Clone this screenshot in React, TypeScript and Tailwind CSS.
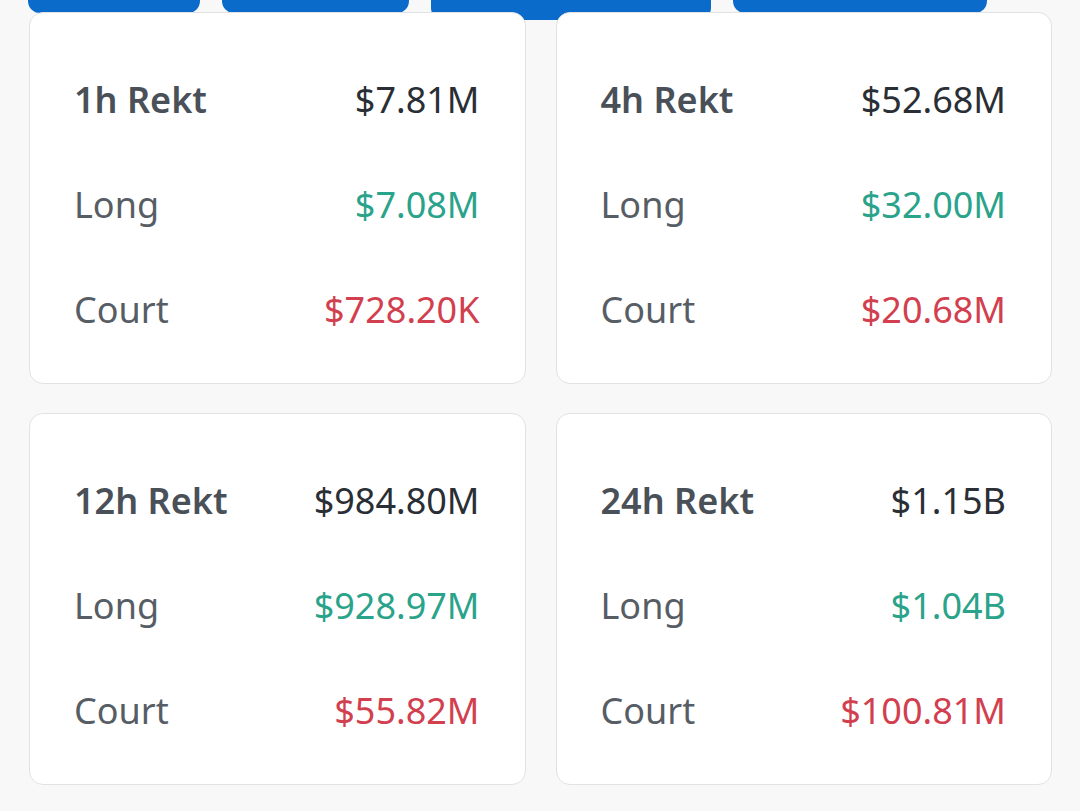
import React from 'react';

interface RektCard {
    title: string;
    total: string;
    long: string;
    short: string;
}

const cards: RektCard[] = [
    { title: '1h Rekt', total: '$7.81M', long: '$7.08M', short: '$728.20K' },
    { title: '4h Rekt', total: '$52.68M', long: '$32.00M', short: '$20.68M' },
    { title: '12h Rekt', total: '$984.80M', long: '$928.97M', short: '$55.82M' },
    { title: '24h Rekt', total: '$1.15B', long: '$1.04B', short: '$100.81M' },
];

const Card: React.FC<{ card: RektCard }> = ({ card }) => (
    <div className="relative bg-white border border-[#e2e2e2] rounded-[14px] h-[372px] pl-[44px] pr-[45px] pt-[59px] flex flex-col gap-[50px]">
        <div className="flex justify-between items-center h-[55px]">
            <span className="font-semibold text-[#4a5058]">{card.title}</span>
            <span className="text-[#2a2e35]">{card.total}</span>
        </div>
        <div className="flex justify-between items-center h-[55px]">
            <span className="text-[#575d65]">Long</span>
            <span className="text-[#2aa38b]">{card.long}</span>
        </div>
        <div className="flex justify-between items-center h-[55px]">
            <span className="text-[#575d65]">Court</span>
            <span className="text-[#d23f4f]">{card.short}</span>
        </div>
    </div>
);

export default function App() {
    return (
        <div className="w-[1080px] h-[811px] overflow-hidden bg-[#f8f8f8] pl-[29px] pr-[28px] text-[36px] leading-none" style={{ fontFamily: '"Noto Sans", "Open Sans", sans-serif' }}>
            {/* tab buttons, mostly scrolled out of view */}
            <div className="flex items-start h-[20px]">
                <div className="w-[172px] h-[13px] bg-[#0b6bcb] rounded-b-[12px] -ml-[1px]" />
                <div className="w-[187px] h-[13px] bg-[#0b6bcb] rounded-b-[12px] ml-[22px]" />
                <div className="w-[280px] h-[20px] bg-[#0b6bcb] rounded-b-[12px] ml-[22px]" />
                <div className="w-[254px] h-[13px] bg-[#0b6bcb] rounded-b-[12px] ml-[22px]" />
            </div>
            <div className="grid grid-cols-2 gap-x-[30px] gap-y-[29px] -mt-[8px]">
                {cards.map((c) => (
                    <Card key={c.title} card={c} />
                ))}
            </div>
        </div>
    );
}
